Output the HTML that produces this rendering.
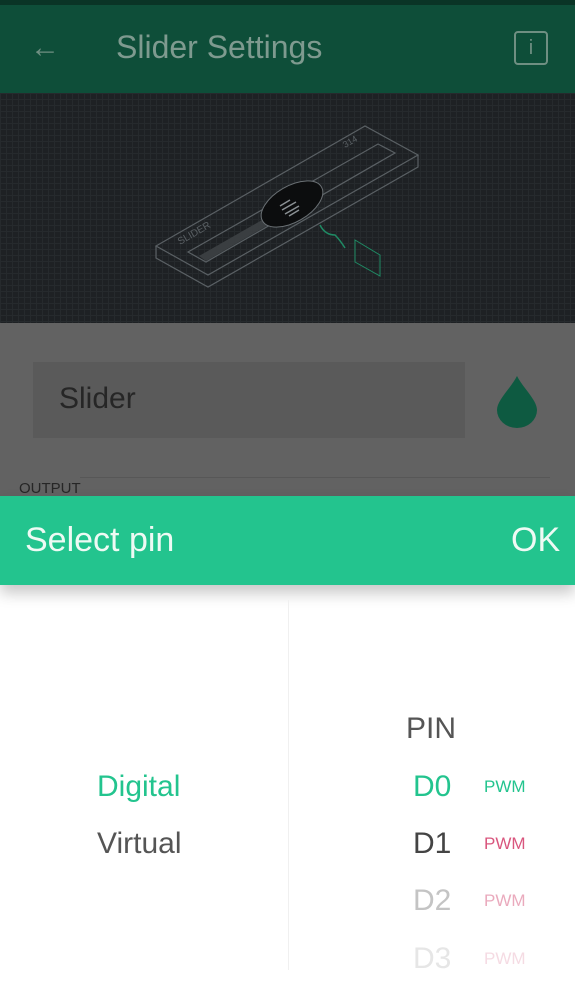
<!DOCTYPE html>
<html><head><meta charset="utf-8"><style>
*{margin:0;padding:0;box-sizing:border-box}
body{width:575px;height:988px;overflow:hidden;font-family:"Liberation Sans",sans-serif;background:#fff;position:relative}
.abs{position:absolute}
</style></head><body>
<div class="abs" style="left:0;top:0;width:575px;height:5px;background:#0a3426"></div>
<div class="abs" style="left:0;top:5px;width:575px;height:88px;background:#0e4e39"></div>
<div class="abs" style="left:30px;top:30px;color:#6f8f82;font-size:30px;line-height:36px">←</div>
<div class="abs" style="left:116px;top:26px;color:#7e9a8f;font-size:32px;line-height:42px">Slider Settings</div>
<div class="abs" style="left:514px;top:31px;width:34px;height:34px;border:2px solid #6f8f82;border-radius:4px;color:#6f8f82;font-size:20px;text-align:center;line-height:30px">i</div>
<div class="abs" style="left:0;top:93px;width:575px;height:230px;background:#1e2124;background-image:linear-gradient(#262a2d 1px,transparent 1px),linear-gradient(90deg,#262a2d 1px,transparent 1px);background-size:6px 6px"></div>
<svg class="abs" style="left:0;top:93px" width="575" height="230" viewBox="0 93 575 230">
<g fill="none" stroke="#5a6064" stroke-width="1.2">
<path d="M156 246 L365 126 L418 155 L208 275 Z"/>
<path d="M156 246 L156 258 L208 287 L418 167 L418 155"/>
<path d="M188 252 L378 144 L395 153 L206 262 Z"/>
</g>
<path d="M199 256 L262 220 L270 224 L206 261 Z" fill="#3a3e41"/>
<ellipse cx="292" cy="204" rx="34" ry="18" transform="rotate(-30 292 204)" fill="#0c0d0e" stroke="#6a7074"/>
<g stroke="#8a9094" stroke-width="1.5"><path d="M280 206l10-6M282 210l14-8M285 214l14-8M289 216l10-6"/></g>
<text x="180" y="245" fill="#5a6064" font-size="10" transform="rotate(-30 180 245)">SLIDER</text>
<text x="345" y="148" fill="#5a6064" font-size="9" transform="rotate(-30 345 148)">314</text>
<path d="M320 225 q5 10 15 10 q5 5 10 13" fill="none" stroke="#1f8a64" stroke-width="1.5"/>
<path d="M355 240 L380 255 L380 276 L355 262Z" fill="none" stroke="#1f8a64"/>
</svg>
<div class="abs" style="left:0;top:323px;width:575px;height:173px;background:#626262"></div>
<div class="abs" style="left:33px;top:362px;width:432px;height:76px;background:#5a5a5a"></div>
<div class="abs" style="left:59px;top:379px;color:#262626;font-size:30px;line-height:40px">Slider</div>
<svg class="abs" style="left:493px;top:374px" width="48" height="54"><path d="M24 2 C18 14 4 26 4 36 A20 18 0 0 0 44 36 C44 26 30 14 24 2Z" fill="#0e5a41"/></svg>
<div class="abs" style="left:80px;top:477px;width:470px;height:1px;background:#575757"></div>
<div class="abs" style="left:19px;top:480px;color:#262626;font-size:15px;line-height:18px">OUTPUT</div>
<div class="abs" style="left:0;top:496px;width:575px;height:89px;background:#23c48e;box-shadow:0 8px 14px rgba(0,0,0,.22)"></div>
<div class="abs" style="left:25px;top:518px;color:#eefaf4;font-size:34px;line-height:44px">Select pin</div>
<div class="abs" style="left:511px;top:518px;color:#eefaf4;font-size:34px;line-height:44px">OK</div>
<div class="abs" style="left:288px;top:600px;width:1px;height:370px;background:#f0f0f0"></div>
<div class="abs" style="left:97px;top:768px;color:#23c48e;font-size:30px;line-height:38px">Digital</div>
<div class="abs" style="left:97px;top:825px;color:#555;font-size:30px;line-height:38px">Virtual</div>
<div class="abs" style="left:406px;top:710px;color:#555;font-size:30px;line-height:38px">PIN</div>
<div class="abs" style="left:413px;top:768px;color:#23c48e;font-size:30px;line-height:38px">D0</div>
<div class="abs" style="left:484px;top:777px;color:#23c48e;font-size:17px">PWM</div>
<div class="abs" style="left:413px;top:825px;color:#444;font-size:30px;line-height:38px">D1</div>
<div class="abs" style="left:484px;top:834px;color:#d9567e;font-size:17px">PWM</div>
<div class="abs" style="left:413px;top:882px;color:#c4c4c4;font-size:30px;line-height:38px">D2</div>
<div class="abs" style="left:484px;top:891px;color:#eaaabd;font-size:17px">PWM</div>
<div class="abs" style="left:413px;top:940px;color:#e6e6e6;font-size:30px;line-height:38px">D3</div>
<div class="abs" style="left:484px;top:949px;color:#f5dbe3;font-size:17px">PWM</div>
</body></html>
